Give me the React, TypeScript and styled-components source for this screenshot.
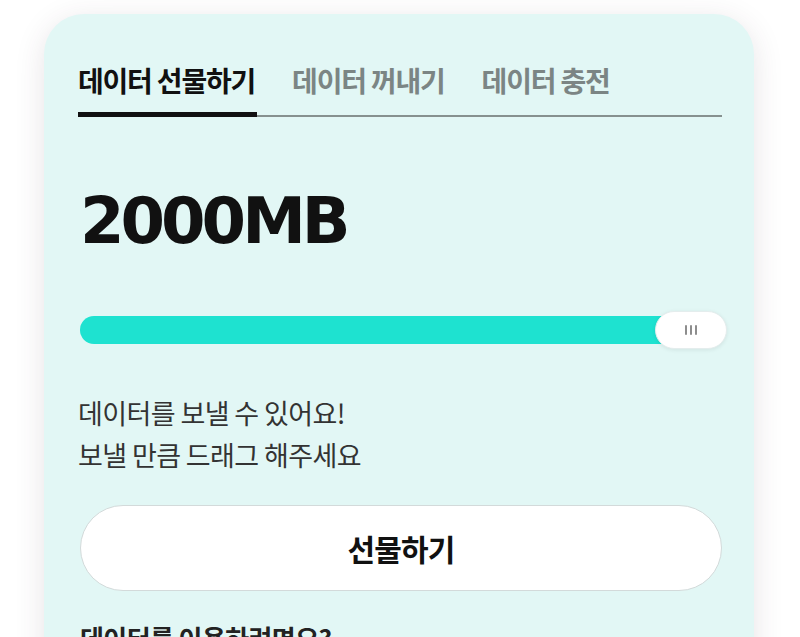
import React from 'react'
import styled, { createGlobalStyle } from 'styled-components'

const GlobalStyle = createGlobalStyle`
  html, body {
    margin: 0;
    padding: 0;
    background: #ffffff;
    font-family: 'Noto Sans CJK KR', 'Noto Sans', sans-serif;
  }
`

const Page = styled.div`
  height: 637px;
  overflow: hidden;
  padding: 14px 0 0 44px;
  box-sizing: border-box;
`

const Card = styled.section`
  width: 710px;
  min-height: 700px;
  box-sizing: border-box;
  padding: 50px 32px 0 34px;
  background: #e2f7f5;
  border-radius: 40px;
  box-shadow: 0 6px 30px rgba(70, 50, 60, 0.13);
`

const TabBar = styled.nav`
  display: flex;
  align-items: flex-end;
  gap: 35px;
  border-bottom: 2px solid #86918f;
`

const Tab = styled.button<{ $active?: boolean }>`
  font-family: inherit;
  font-size: 28px;
  line-height: 32px;
  letter-spacing: -1.2px;
  font-weight: 700;
  padding: 0 2px 16px 0;
  margin: 0 0 -2px 0;
  background: none;
  border: none;
  border-bottom: 5px solid ${(p) => (p.$active ? '#111111' : 'transparent')};
  color: ${(p) => (p.$active ? '#111111' : '#7b8584')};
  cursor: pointer;
`

const Amount = styled.h1`
  margin: 72px 0 0 2px;
  font-family: 'DejaVu Sans', sans-serif;
  font-size: 64px;
  line-height: 64px;
  font-weight: 700;
  letter-spacing: -4px;
  color: #111111;
`

const SliderRow = styled.div`
  display: flex;
  align-items: center;
  margin: 58px -5px 0 2px;
`

const Track = styled.div`
  flex: 1;
  height: 28px;
  border-radius: 14px;
  background: #1ee2d0;
  margin-right: -26px;
`

const Thumb = styled.div`
  position: relative;
  z-index: 1;
  width: 72px;
  height: 38px;
  box-sizing: border-box;
  border-radius: 19px;
  background: #ffffff;
  border: 1px solid #e4eded;
  box-shadow: 0 1px 4px rgba(0, 0, 0, 0.08);
  display: flex;
  align-items: center;
  justify-content: center;
  gap: 3px;
`

const Grip = styled.span`
  width: 2px;
  height: 10px;
  background: #8d8d8d;
  border-radius: 1px;
`

const Hint = styled.p`
  margin: 43px 0 0 0;
  font-size: 27px;
  line-height: 42px;
  letter-spacing: -0.6px;
  color: #333333;
`

const GiftButton = styled.button`
  display: block;
  width: 642px;
  height: 86px;
  margin: 29px 0 0 2px;
  border-radius: 43px;
  border: 1px solid #d3dada;
  background: #ffffff;
  font-family: inherit;
  font-size: 30px;
  font-weight: 700;
  letter-spacing: -0.8px;
  color: #111111;
  cursor: pointer;
`

const Footer = styled.h2`
  margin: 30px 0 0 2px;
  font-size: 26px;
  line-height: 34px;
  font-weight: 700;
  letter-spacing: -0.6px;
  color: #222222;
`

const tabs = ['데이터 선물하기', '데이터 꺼내기', '데이터 충전']

export default function App() {
  return (
    <>
      <GlobalStyle />
      <Page>
        <Card>
          <TabBar>
            {tabs.map((t, i) => (
              <Tab key={t} $active={i === 0}>
                {t}
              </Tab>
            ))}
          </TabBar>

          <Amount>2000MB</Amount>

          <SliderRow>
            <Track />
            <Thumb>
              <Grip />
              <Grip />
              <Grip />
            </Thumb>
          </SliderRow>

          <Hint>
            데이터를 보낼 수 있어요!
            <br />
            보낼 만큼 드래그 해주세요
          </Hint>

          <GiftButton type="button">선물하기</GiftButton>

          <Footer>데이터를 이용하려면요?</Footer>
        </Card>
      </Page>
    </>
  )
}
